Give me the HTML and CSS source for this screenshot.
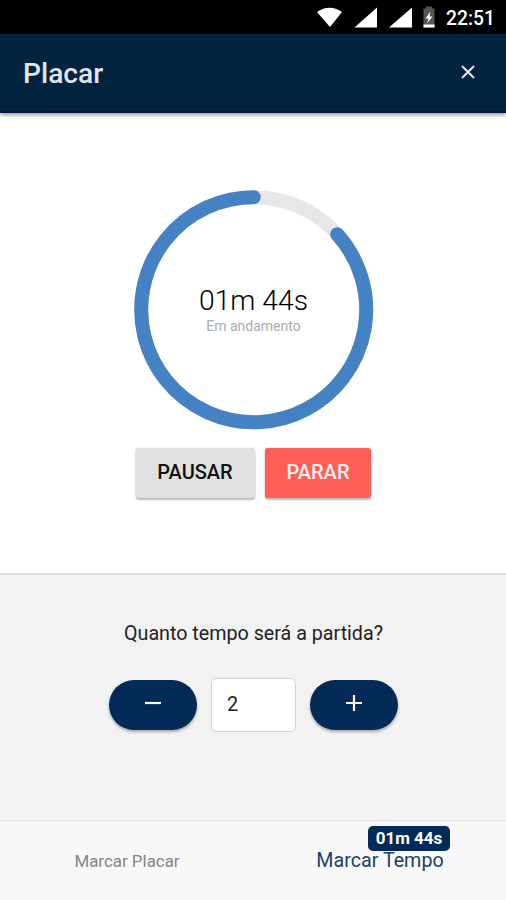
FILE: index.html
```html
<!DOCTYPE html>
<html lang="pt-BR">
<head>
<meta charset="utf-8">
<title>Placar</title>
<link rel="stylesheet" href="styles.css">
</head>
<body>
<div class="status">
  <svg class="status-icons" width="122" height="34" viewBox="0 0 122 34">
    <path fill="#fff" d="M0 12Q12.500 3.500 25 12L13 27Z"/>
    <path fill="#fff" d="M37.500 27.500L60 7.500V27.500Z"/>
    <path fill="#fff" d="M72 27.500L95 7.500V27.500Z"/>
    <path fill="#555" d="M109 6.500h6v2h2.500v19h-11v-19h2.500z"/>
    <path fill="#fff" d="M106.500 24.500h11v3h-11zM113.500 11.500l-5 7h3l-1.500 5 5.500-7h-3z"/>
  </svg>
  <span class="clock">22:51</span>
</div>
<header class="bar">
  <h1 class="title">Placar</h1>
  <svg class="close" width="14" height="14" viewBox="0 0 14 14"><path d="M1 1L13 13M13 1L1 13" stroke="#e4e6ec" stroke-width="2.100"/></svg>
</header>
<main class="timer">
  <div class="dial">
    <svg class="ring" width="240" height="240" viewBox="0 0 240 240" fill="none" stroke-width="14">
      <circle cx="119.700" cy="119.700" r="112.500" stroke="#e6e7e9"/>
      <path d="M203.200 44.300A112.500 112.500 0 1 1 119.700 7.200" stroke="#4482c3" stroke-linecap="round"/>
    </svg>
    <div class="time">01m 44s</div>
    <div class="state">Em andamento</div>
  </div>
  <div class="actions">
    <button class="btn pause">PAUSAR</button>
    <button class="btn stop">PARAR</button>
  </div>
</main>
<section class="setup">
  <p class="question">Quanto tempo será a partida?</p>
  <div class="stepper">
    <button class="step"><svg width="18" height="18" viewBox="0 0 18 18"><path d="M1 9H17" stroke="#fff" stroke-width="2.200"/></svg></button>
    <div class="value">2</div>
    <button class="step"><svg width="18" height="18" viewBox="0 0 18 18"><path d="M1 9H17M9 1V17" stroke="#fff" stroke-width="2.200"/></svg></button>
  </div>
</section>
<nav class="tabs">
  <div class="tab"><span class="label">Marcar Placar</span></div>
  <div class="tab active"><span class="label">Marcar Tempo</span><span class="badge">01m 44s</span></div>
</nav>
</body>
</html>
```
FILE: styles.css
```css
* { box-sizing: border-box; }
body { margin: 0; height: 900px; display: flex; flex-direction: column; overflow: hidden; background: #fff; font-family: Roboto, "Liberation Sans", sans-serif; color: #111; }
.status { flex: none; height: 34px; background: #000; display: flex; align-items: center; justify-content: flex-end; padding-right: 11px; }
.status-icons { margin-right: 7px; overflow: visible; }
.clock { color: #fff; font-size: 19.3px; font-weight: 500; line-height: 34px; width: 49px; padding-top: 3px; white-space: nowrap; }
.bar { flex: none; height: 79px; background: #04233f; border-bottom: 2px solid #06133a; display: flex; align-items: center; justify-content: space-between; padding: 0 31px 0 23px; box-shadow: 0 2px 4px rgba(0,0,0,.4); position: relative; }
.title { margin: 0; padding-top: 2px; font-size: 28.2px; line-height: 34px; font-weight: 500; color: #dfe4ef; }
.close { margin-top: -1px; }
.timer { flex: none; height: 460px; padding-top: 77px; display: flex; flex-direction: column; align-items: center; }
.dial { width: 240px; height: 240px; margin-left: 1px; display: grid; grid-template-rows: 92px 34px 20px; justify-items: center; }
.ring { grid-area: 1 / 1 / 2 / 2; overflow: visible; }
.time { grid-row: 2; font-size: 28.3px; line-height: 38px; font-weight: 300; color: #000; white-space: nowrap; }
.state { grid-row: 3; font-size: 14px; line-height: 20px; color: #aaa; white-space: nowrap; }
.actions { display: flex; gap: 10px; margin-top: 18px; }
.btn { border: 0; padding: 0 0 2px; height: 50px; border-radius: 3px; font: 500 20px/48px Roboto, sans-serif; box-shadow: 0 2px 2px rgba(0,0,0,.25), 0 0 2px rgba(0,0,0,.16); }
.pause { width: 119px; background: #e0e0e0; color: #111; }
.stop { width: 106px; background: #fe5e58; color: #fff0ef; padding-left: 1px; }
.setup { flex: none; height: 247px; background: #f2f2f2; border-top: 2px solid #dfdfdf; display: flex; flex-direction: column; align-items: center; }
.question { margin: 47px 0 0; padding-left: 1px; font-size: 19.7px; line-height: 24px; color: #222; white-space: nowrap; }
.stepper { display: flex; align-items: center; gap: 14px; margin: 32px 0 0 1px; }
.step { width: 88px; height: 50px; padding: 0 0 4px; border: 0; border-radius: 25px; background: #042b57; display: flex; align-items: center; justify-content: center; box-shadow: 0 2px 3px rgba(0,0,0,.3); }
.value { width: 85px; height: 54px; border: 1.500px solid #d2d2d2; border-radius: 5px; background: #fff; padding-left: 15px; font-size: 20px; line-height: 51px; color: #222; }
.tabs { flex: none; height: 80px; background: #f8f8f8; border-top: 1px solid #dcdcdc; display: grid; grid-template-columns: 1fr 1fr; }
.tab { position: relative; display: flex; justify-content: center; align-items: center; font-size: 16.9px; color: #858585; padding-left: 1px; }
.active { font-size: 19.7px; color: #1d3f65; }
.label { white-space: nowrap; }
.badge { position: absolute; left: 115px; top: 5px; width: 82px; height: 25px; border-radius: 5px; background: #042b57; color: #fff; font-size: 17px; font-weight: 700; line-height: 25px; text-align: center; white-space: nowrap; }
```
